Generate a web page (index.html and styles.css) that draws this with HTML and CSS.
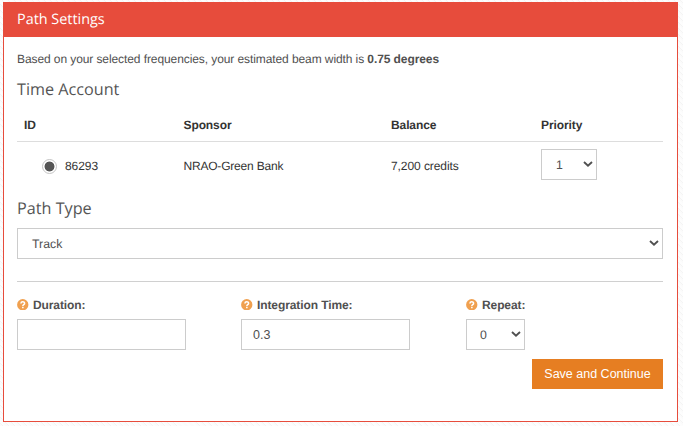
FILE: index.html
```html
<!DOCTYPE html>
<html lang="en">
<head>
<meta charset="utf-8">
<title>Path Settings</title>
<link rel="stylesheet" href="styles.css">
</head>
<body>
<section class="panel">
  <header class="panel-header"><span>Path Settings</span></header>
  <form class="panel-body">
    <p class="intro"><span class="intro-text">Based on your selected frequencies, your estimated beam width is <b>0.75 degrees</b></span></p>
    <h3 class="heading heading-account"><span>Time Account</span></h3>
    <div class="accounts">
      <div class="row row-head"><span>ID</span><span>Sponsor</span><span>Balance</span><span>Priority</span></div>
      <div class="row row-item">
        <label class="account"><input class="radio" type="radio" checked><span>86293</span></label>
        <span class="sponsor">NRAO-Green Bank</span>
        <span>7,200 credits</span>
        <div class="select priority"><span>1</span><svg class="chevron" viewBox="0 0 10 6"><path d="M1 1l4 3.6L9 1"/></svg></div>
      </div>
    </div>
    <h3 class="heading heading-type"><span>Path Type</span></h3>
    <div class="select path-type"><span>Track</span><svg class="chevron" viewBox="0 0 10 6"><path d="M1 1l4 3.6L9 1"/></svg></div>
    <hr class="rule">
    <div class="fields">
      <div class="field">
        <label class="label"><svg class="help" viewBox="0 0 12 12"><circle cx="6" cy="6" r="5.9"/><path d="M4.1 4.7C4.2 2.4 7.9 2.4 7.9 4.6C7.9 5.9 6.1 5.9 6.1 7.2M6.1 8.2v1.5"/></svg><span>Duration:</span></label>
        <input class="input" type="text">
      </div>
      <div class="field">
        <label class="label"><svg class="help" viewBox="0 0 12 12"><circle cx="6" cy="6" r="5.9"/><path d="M4.1 4.7C4.2 2.4 7.9 2.4 7.9 4.6C7.9 5.9 6.1 5.9 6.1 7.2M6.1 8.2v1.5"/></svg><span>Integration Time:</span></label>
        <input class="input" type="text" value="0.3">
      </div>
      <div class="field">
        <label class="label"><svg class="help" viewBox="0 0 12 12"><circle cx="6" cy="6" r="5.9"/><path d="M4.1 4.7C4.2 2.4 7.9 2.4 7.9 4.6C7.9 5.9 6.1 5.9 6.1 7.2M6.1 8.2v1.5"/></svg><span>Repeat:</span></label>
        <div class="select repeat"><span>0</span><svg class="chevron" viewBox="0 0 10 6"><path d="M1 1l4 3.6L9 1"/></svg></div>
      </div>
    </div>
    <div class="actions"><button class="save" type="button">Save and Continue</button></div>
  </form>
</section>
</body>
</html>
```
FILE: styles.css
```css
* { box-sizing: border-box; }
body {
  margin: 0;
  height: 426px;
  padding: 2px 5px 4px 3px;
  overflow: hidden;
  background: repeating-linear-gradient(45deg, #fbfbfb 0 1.5px, #f4f4f4 1.5px 2.2px, #fdfdfd 2.2px 4.24px);
  font: 12px/18px "Liberation Sans", Arial, sans-serif;
  text-rendering: geometricPrecision;
  color: #505050;
}
.panel { height: 420px; border: 1px solid #e74c3c; background: #fff; }
.panel-header {
  height: 34px;
  padding-left: 13px;
  background: #e74c3c;
  color: #fff;
  font: 500 14.4px/33px "Open Sans", sans-serif;
}
.panel-body { padding: 0 14px 0 13px; }
.intro { margin: 0; height: 40px; padding-top: 13px; white-space: nowrap; letter-spacing: -0.09px; }
.heading { margin: 0; font: 16.2px/24px "Open Sans", sans-serif; color: #555; }
.heading-account { height: 32px; }
.row { display: grid; grid-template-columns: 159.5px 207.5px 150px 1fr; padding-left: 7px; color: #333; }
.row-head { height: 33px; padding-top: 7px; border-bottom: 1px solid #ddd; font-weight: bold; letter-spacing: -0.1px; }
.row-item { height: 54px; padding-top: 7px; line-height: 34px; letter-spacing: -0.08px; }
.sponsor { letter-spacing: -0.2px; }
.account { display: flex; padding-left: 18px; }
.radio {
  appearance: none;
  width: 15px;
  height: 15px;
  margin: 10px 8px 0 0;
  border: 1px solid #c4c4c4;
  border-radius: 50%;
  background: radial-gradient(circle, #555 0 4.6px, #fff 5.3px);
}
.select {
  display: flex;
  align-items: center;
  justify-content: space-between;
  height: 31px;
  padding: 0 3px 0 14px;
  border: 1px solid #ccc;
  background: #fff;
  font-size: 12.3px;
  line-height: 18px;
  color: #505050;
}
.chevron { width: 10px; height: 6px; margin-bottom: 1px; fill: none; stroke: #505050; stroke-width: 1.9; }
.priority { width: 56px; }
.heading-type { height: 32px; }
.rule { height: 1px; margin: 22px 0 14px; border: 0; background: #d0d0d0; }
.fields { display: grid; grid-template-columns: 224px 225px 1fr; }
.label { display: flex; align-items: center; gap: 4.5px; height: 18px; margin-bottom: 5px; font-weight: bold; letter-spacing: -0.1px; }
.help { width: 11.5px; height: 11.5px; margin-bottom: 1px; fill: #f0a04f; }
.help path { fill: none; stroke: #fff; stroke-width: 1.6; }
.input {
  display: block;
  width: 169px;
  height: 31px;
  padding: 0 11px;
  border: 1px solid #ccc;
  font: 12.5px "Liberation Sans", Arial, sans-serif;
  color: #505050;
}
.repeat { width: 59px; padding-right: 3px; padding-left: 13px; }
.actions { display: flex; justify-content: flex-end; padding-top: 9px; }
.save {
  width: 131px;
  height: 30px;
  padding: 0;
  border: 0;
  background: #e67e22;
  color: #fff;
  font: 12.5px/30px "Liberation Sans", Arial, sans-serif;
}
```
